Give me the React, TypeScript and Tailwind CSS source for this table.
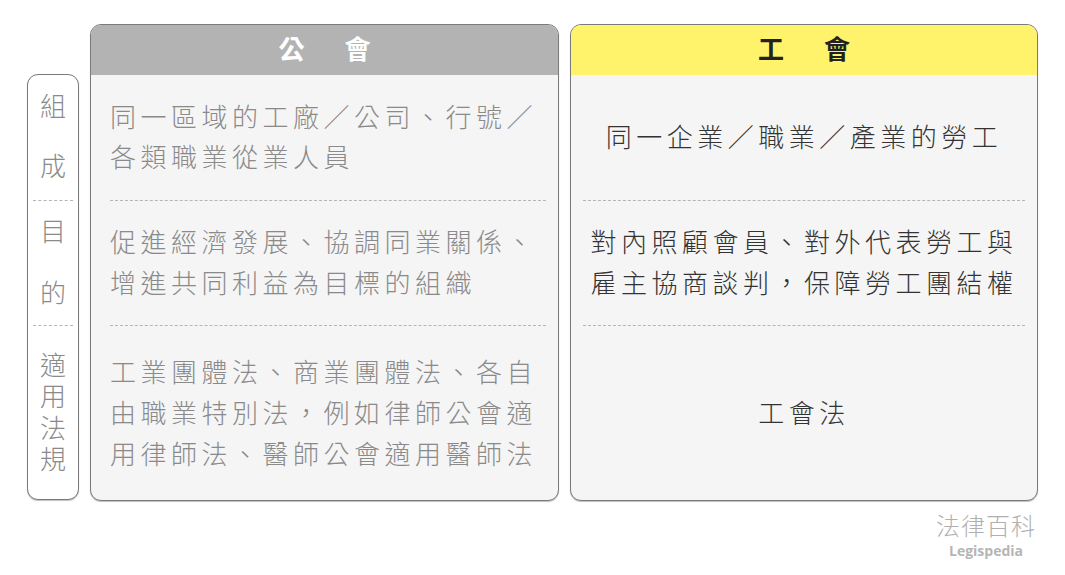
import React from "react";

const font = { fontFamily: '"Noto Sans CJK TC", "Noto Sans", sans-serif' };

function Dash({ className }: { className: string }) {
  return <div className={`h-0 border-t border-dashed border-[#b5b5b5] ${className}`} />;
}

export default function App() {
  return (
    <div className="w-[1065px] h-[575px] bg-white relative overflow-hidden" style={font}>
      <div className="flex pt-[24px] pl-[27px]">
        {/* label column */}
        <div className="mt-[50px] w-[52px] h-[426px] border border-[#7a7a7a] rounded-[11px] bg-white flex flex-col text-[#8a8a8a] text-[26px] font-light shadow-[0_1px_1px_rgba(0,0,0,0.25)]">
          <div className="h-[125px] pb-[6px] flex flex-col items-center justify-center gap-[30px] leading-[30px]">
            <span>組</span>
            <span>成</span>
          </div>
          <Dash className="mx-[5px]" />
          <div className="h-[124px] pb-[4px] flex flex-col items-center justify-center gap-[32px] leading-[30px]">
            <span>目</span>
            <span>的</span>
          </div>
          <Dash className="mx-[5px]" />
          <div className="flex-1 pb-[4px] flex flex-col items-center justify-center leading-[31.5px]">
            <span>適</span>
            <span>用</span>
            <span>法</span>
            <span>規</span>
          </div>
        </div>

        {/* 公會 */}
        <div className="ml-[11px] w-[469px] h-[477px] border border-[#7a7a7a] rounded-[11px] bg-[#f5f5f5] overflow-hidden flex flex-col shadow-[0_1px_1px_rgba(0,0,0,0.25)]">
          <div className="h-[50px] pb-[5px] bg-[#b3b3b3] flex items-center justify-center gap-[40px] text-white text-[26px] font-bold">
            <span>公</span>
            <span>會</span>
          </div>
          <div className="flex-1 flex flex-col text-[#8a8a8a] text-[26px] font-light tracking-[4.5px] whitespace-nowrap">
            <div className="h-[125px] pb-[4px] flex flex-col justify-center pl-[19px] leading-[40px]">
              <span>同一區域的工廠／公司、行號／</span>
              <span>各類職業從業人員</span>
            </div>
            <Dash className="ml-[19px] mr-[12px]" />
            <div className="h-[124px] pb-[4px] flex flex-col justify-center pl-[19px] leading-[41px]">
              <span>促進經濟發展、協調同業關係、</span>
              <span>增進共同利益為目標的組織</span>
            </div>
            <Dash className="ml-[19px] mr-[12px]" />
            <div className="flex-1 pb-[4px] flex flex-col justify-center pl-[19px] leading-[41px]">
              <span>工業團體法、商業團體法、各自</span>
              <span>由職業特別法，例如律師公會適</span>
              <span>用律師法、醫師公會適用醫師法</span>
            </div>
          </div>
        </div>

        {/* 工會 */}
        <div className="ml-[11px] w-[468px] h-[477px] border border-[#7a7a7a] rounded-[11px] bg-[#f5f5f5] overflow-hidden flex flex-col shadow-[0_1px_1px_rgba(0,0,0,0.25)]">
          <div className="h-[50px] pb-[5px] bg-[#fff36b] flex items-center justify-center gap-[40px] text-[#222] text-[26px] font-bold">
            <span>工</span>
            <span>會</span>
          </div>
          <div className="flex-1 flex flex-col text-[#333] text-[26px] font-light tracking-[4.5px] whitespace-nowrap">
            <div className="h-[125px] pb-[4px] flex flex-col items-center justify-center leading-[40px]">
              <span>同一企業／職業／產業的勞工</span>
            </div>
            <Dash className="mx-[12px]" />
            <div className="h-[124px] pb-[4px] flex flex-col items-center justify-center leading-[41px]">
              <span>對內照顧會員、對外代表勞工與</span>
              <span>雇主協商談判，保障勞工團結權</span>
            </div>
            <Dash className="mx-[12px]" />
            <div className="flex-1 pb-[4px] flex flex-col items-center justify-center leading-[41px]">
              <span>工會法</span>
            </div>
          </div>
        </div>
      </div>

      {/* logo */}
      <div className="flex justify-end pr-[29px] mt-[9px]">
        <div className="flex flex-col items-center">
          <span className="text-[24px] leading-[30px] text-[#b0b0b0] font-light tracking-[1px]">法律百科</span>
          <span
            className="text-[14px] leading-[18px] mt-[2px] font-bold text-[#b5b5b5]"
            style={{ fontFamily: '"Open Sans", "Noto Sans", sans-serif' }}
          >
            Legispedia
          </span>
        </div>
      </div>
    </div>
  );
}
